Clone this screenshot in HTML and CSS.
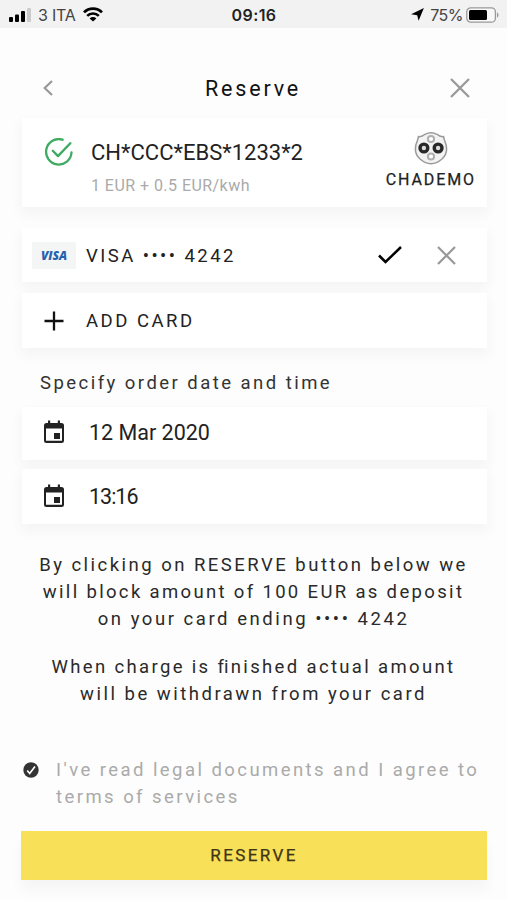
FILE: index.html
```html
<!DOCTYPE html>
<html lang="en">
<head>
<meta charset="utf-8">
<title>Reserve</title>
<link rel="stylesheet" href="styles.css">
</head>
<body>
<div class="status">
  <div class="status-left">
    <svg width="23" height="14" viewBox="0 0 23 14"><rect x="0" y="9" width="4" height="5" rx="1"/><rect x="6" y="6.500" width="4" height="7.500" rx="1"/><rect x="12" y="3" width="4" height="11" rx="1"/><rect x="18" y="0" width="4" height="14" rx="1" fill="#ccc"/></svg>
    <span class="carrier">3 ITA</span>
    <svg class="wifi" width="20" height="15" viewBox="0 0 20 15" fill="none" stroke="#000" stroke-width="2.700"><path d="M1 5.400a12.600 12.600 0 0 1 18 0M4.200 8.900a8.200 8.200 0 0 1 11.600 0"/><path d="M10 14.600L6.600 11.500a4.800 4.800 0 0 1 6.800 0z" fill="#000" stroke="none"/></svg>
  </div>
  <span class="clock">09:16</span>
  <div class="status-right">
    <svg width="13" height="13" viewBox="0 0 13 13"><path d="M12.900.1L7.600 12.800 6.200 7.200 .1 6.200z"/></svg>
    <span class="percent">75%</span>
    <svg width="33" height="16" viewBox="0 0 33 16"><rect x=".8" y=".8" width="28.600" height="14.400" rx="4" fill="#f8f8f8" stroke="#999" stroke-width="1.300"/><rect x="3" y="3" width="18" height="10" rx="1.500"/><path d="M31 5.500c2 .5 2 4.500 0 5z" fill="#999"/></svg>
  </div>
</div>
<header class="header">
  <svg width="10" height="16" viewBox="0 0 10 16" fill="none" stroke="#999" stroke-width="2.200"><path d="M9 1L1.700 8 9 15"/></svg>
  <h1 class="title">Reserve</h1>
  <svg width="20" height="20" viewBox="0 0 20 20" fill="none" stroke="#999" stroke-width="2.300"><path d="M1 1l18 18M19 1L1 19"/></svg>
</header>
<main class="main">
  <section class="card station">
    <svg class="ok" width="28" height="28" viewBox="0 0 28 28" fill="none" stroke="#3dab60" stroke-width="2.300" stroke-linecap="round" stroke-linejoin="round"><path d="M17.600 1.700A12.700 12.700 0 1 0 26.500 14.500M7.800 12.800l5.200 5.300L25.300 5.200"/></svg>
    <div class="station-info">
      <div class="station-id">CH*CCC*EBS*1233*2</div>
      <div class="price">1 EUR + 0.5 EUR/kwh</div>
    </div>
    <div class="connector">
      <svg width="34" height="34" viewBox="0 0 34 34" fill="none"><path d="M4.500 5.600Q8 6 11 3.300 17 .2 23 3.300 26 6 29.500 5.600L30.400 9C34 17 33.500 23 28 28 21 34 13 34 6 28 .5 23 0 17 3.600 9z" fill="#f3f3f3" stroke="#999" stroke-width="1.500"/><circle cx="17" cy="8" r="3.100" fill="#fff" stroke="#b0b0b0" stroke-width="2"/><circle cx="17" cy="25.500" r="3.100" fill="#fff" stroke="#b0b0b0" stroke-width="2"/><circle cx="9.900" cy="17" r="3.900" fill="#ddd" stroke="#292929" stroke-width="3.400"/><circle cx="24.100" cy="17" r="3.900" fill="#ddd" stroke="#292929" stroke-width="3.400"/></svg>
      <span class="connector-name">CHADEMO</span>
    </div>
  </section>
  <section class="card pay">
    <span class="visa">VISA</span>
    <span class="pay-text">VISA <span class="dots">••••</span> 4242</span>
    <svg class="tick" width="24" height="18" viewBox="0 0 24 18" fill="none" stroke="#000" stroke-width="2.500"><path d="M1 9.500l6.500 6.500L23 1"/></svg>
    <svg class="remove" width="19" height="19" viewBox="0 0 19 19" fill="none" stroke="#999" stroke-width="2.200"><path d="M1 1l17 17M18 1L1 18"/></svg>
  </section>
  <section class="card add">
    <svg width="20" height="20" viewBox="0 0 20 20" stroke="#111" stroke-width="2.300"><path d="M10 .5v19M.5 10h19"/></svg>
    <span class="add-text">ADD CARD</span>
  </section>
  <h2 class="label">Specify order date and time</h2>
  <section class="card when">
    <svg width="22" height="24" viewBox="0 0 22 24"><path fill="#222" fill-rule="evenodd" d="M5 .5h2.200V3h7.600V.5H17V3h1.500Q21 3 21 5.500v15q0 2.500-2.500 2.500h-15Q1 23 1 20.500v-15Q1 3 3.500 3H5zM3 8.500v12.300h16V8.500zM11 13h6v6h-6z"/></svg>
    <span class="date">12 Mar 2020</span>
  </section>
  <section class="card when">
    <svg width="22" height="24" viewBox="0 0 22 24"><path fill="#222" fill-rule="evenodd" d="M5 .5h2.200V3h7.600V.5H17V3h1.500Q21 3 21 5.500v15q0 2.500-2.500 2.500h-15Q1 23 1 20.500v-15Q1 3 3.500 3H5zM3 8.500v12.300h16V8.500zM11 13h6v6h-6z"/></svg>
    <span class="time">13:16</span>
  </section>
  <div class="notes">
    <p><span class="n1">By clicking on RESERVE button below we</span><span class="n2">will block amount of 100 EUR as deposit</span><span class="n3">on your card ending <span class="dots">••••</span> 4242</span></p>
    <p><span class="n4">When charge is <span class="tight">f</span>inished actual amount</span><span class="n5">will be withdrawn from your card</span></p>
  </div>
  <div class="legal">
    <svg width="16" height="16" viewBox="0 0 16 16"><circle cx="8" cy="8" r="7.700" fill="#333"/><path d="M4.200 8.500l2.500 3L12 4.500" fill="none" stroke="#fff" stroke-width="1.700"/></svg>
    <p><span class="l1">I've read legal documents and I agree to</span><span class="l2">terms of services</span></p>
  </div>
  <button class="reserve">RESERVE</button>
</main>
</body>
</html>
```
FILE: styles.css
```css
* { box-sizing: border-box; }
body { margin: 0; width: 507px; height: 900px; overflow: hidden; background: #fdfdfd; color: #222; font-family: Roboto, "Liberation Sans", sans-serif; white-space: nowrap; }
svg { display: block; flex: none; }
p, h1, h2 { margin: 0; font-weight: 400; }
.status { height: 28px; background: #f2f2f2; display: grid; grid-template-columns: 1fr auto 1fr; align-items: center; padding: 2px 8px 0 9px; font-family: Inter, sans-serif; font-size: 16px; color: #444; }
.status-left, .status-right { display: flex; align-items: center; }
.status-right { justify-content: flex-end; padding-bottom: 1px; }
.carrier { margin-left: 6px; letter-spacing: -.2px; }
.wifi { margin: -1px 0 0 7px; }
.clock { color: #222; font-weight: 600; letter-spacing: .4px; }
.percent { margin: 0 3px 0 6px; letter-spacing: -.5px; }
.header { height: 90px; padding: 30px 37px 0 43px; display: flex; align-items: center; justify-content: space-between; }
.title { font-size: 21.5px; letter-spacing: 2.8px; margin-left: 3px; color: #111; }
.main { padding: 0 20px 0 22px; }
.card { background: #fff; display: flex; align-items: center; box-shadow: 0 6px 12px 2px rgba(0, 0, 0, .035); }
.station { height: 89px; align-items: flex-start; padding: 0 11px 0 23px; }
.ok { margin-top: 20px; }
.station-info { margin: 22px 0 0 18px; flex: 1; }
.station-id { font-size: 22px; line-height: 26px; }
.price { font-size: 16px; line-height: 20px; margin-top: 10px; letter-spacing: .45px; color: #aaa; }
.connector { margin-top: 13px; display: flex; flex-direction: column; align-items: center; }
.connector-name { font-size: 16px; line-height: 20px; margin-top: 5px; letter-spacing: 1.9px; font-weight: 400; -webkit-text-stroke: .25px #222; }
.pay { height: 54px; margin-top: 21px; padding-left: 10px; }
.visa { width: 44px; height: 27px; background: #f4f6f6; color: #2462b1; font: italic 800 12px/27px "Open Sans", sans-serif; text-align: center; letter-spacing: -.1px; }
.pay-text { margin: 2px 0 0 10px; font-size: 18.5px; letter-spacing: 2.45px; flex: 1; }
.tick { margin-right: 35px; }
.remove { margin-right: 31px; }
.add { height: 55px; margin-top: 11px; padding-left: 22px; }
.add-text { margin-left: 22px; font-size: 18.5px; letter-spacing: 2.5px; }
.label { font-size: 18.5px; line-height: 26px; letter-spacing: 2.46px; margin: 22px 0 11px 18px; color: #333; }
.when { height: 53px; padding: 0 0 3px 21px; }
.when + .when { height: 55px; margin-top: 9px; padding-bottom: 1px; }
.date, .time { margin-left: 24px; font-size: 21.5px; }
.time { letter-spacing: -1px; }
.notes { margin: 28px 1px 0 -1px; text-align: center; font-size: 18.5px; line-height: 27px; color: #2a2a2a; }
.notes p + p { margin-top: 21px; }
.notes p > span, .legal p > span { display: block; }
.n1 { letter-spacing: 2.48px; }
.n2 { letter-spacing: 2.34px; }
.n3 { letter-spacing: 2.55px; }
.n4 { letter-spacing: 2.35px; }
.n5 { letter-spacing: 2.5px; }
.tight { letter-spacing: 0; }
.legal { display: flex; gap: 17px; margin-top: 49px; padding-left: 1px; color: #aaa; font-size: 18.5px; line-height: 27px; letter-spacing: 2.44px; }
.legal svg { margin-top: 5px; }
.reserve { display: block; width: 466px; height: 49px; margin: 20px 0 0 -1px; padding: 0; border: 0; background: #f8e058; color: #3d3516; font: 400 17px/49px Roboto, sans-serif; letter-spacing: 2.4px; -webkit-text-stroke: .25px #3d3516; box-shadow: 0 10px 12px rgba(0, 0, 0, .035); }
```
